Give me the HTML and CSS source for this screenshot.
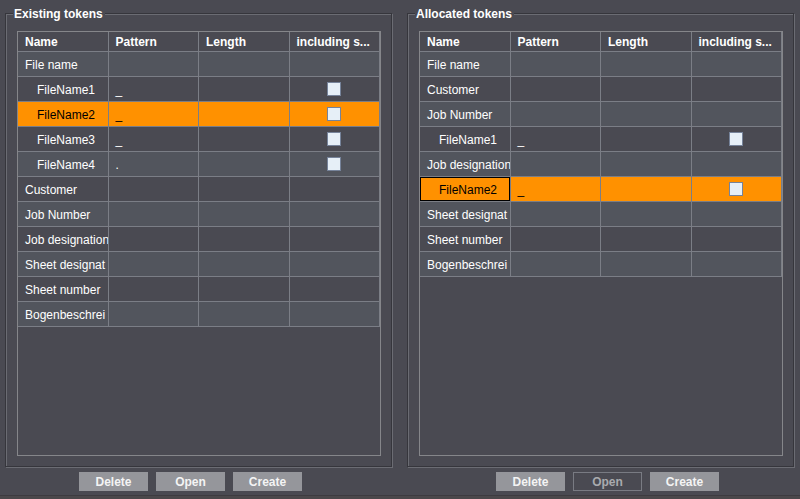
FILE: index.html
```html
<!DOCTYPE html>
<html lang="en">
<head>
  <meta charset="UTF-8" />
  <title>Tokens</title>
  <link rel="stylesheet" href="styles.css">
</head>
<body>

<main class="panels">
  <section class="panel">
    <fieldset class="group">
      <legend>Existing tokens</legend>
      <div class="list">
        <table>
          <thead>
            <tr><th>Name</th><th>Pattern</th><th>Length</th><th>including s...</th></tr>
          </thead>
          <tbody>
            <tr><td>File name</td><td></td><td></td><td></td></tr>
            <tr><td class="sub">FileName1</td><td>_</td><td></td><td class="check"><input type="checkbox" aria-label="FileName1 including separator"></td></tr>
            <tr class="selected"><td class="sub">FileName2</td><td>_</td><td></td><td class="check"><input type="checkbox" aria-label="FileName2 including separator"></td></tr>
            <tr><td class="sub">FileName3</td><td>_</td><td></td><td class="check"><input type="checkbox" aria-label="FileName3 including separator"></td></tr>
            <tr><td class="sub">FileName4</td><td>.</td><td></td><td class="check"><input type="checkbox" aria-label="FileName4 including separator"></td></tr>
            <tr><td>Customer</td><td></td><td></td><td></td></tr>
            <tr><td>Job Number</td><td></td><td></td><td></td></tr>
            <tr><td>Job designation</td><td></td><td></td><td></td></tr>
            <tr><td>Sheet designat</td><td></td><td></td><td></td></tr>
            <tr><td>Sheet number</td><td></td><td></td><td></td></tr>
            <tr><td>Bogenbeschrei</td><td></td><td></td><td></td></tr>
          </tbody>
        </table>
      </div>
    </fieldset>
    <div class="buttons buttons-existing">
      <button type="button">Delete</button>
      <button type="button">Open</button>
      <button type="button">Create</button>
    </div>
  </section>

  <section class="panel">
    <fieldset class="group">
      <legend>Allocated tokens</legend>
      <div class="list">
        <table>
          <thead>
            <tr><th>Name</th><th>Pattern</th><th>Length</th><th>including s...</th></tr>
          </thead>
          <tbody>
            <tr><td>File name</td><td></td><td></td><td></td></tr>
            <tr><td>Customer</td><td></td><td></td><td></td></tr>
            <tr><td>Job Number</td><td></td><td></td><td></td></tr>
            <tr><td class="sub">FileName1</td><td>_</td><td></td><td class="check"><input type="checkbox" aria-label="FileName1 including separator"></td></tr>
            <tr><td>Job designation</td><td></td><td></td><td></td></tr>
            <tr class="selected"><td class="sub focused">FileName2</td><td>_</td><td></td><td class="check"><input type="checkbox" aria-label="FileName2 including separator"></td></tr>
            <tr><td>Sheet designat</td><td></td><td></td><td></td></tr>
            <tr><td>Sheet number</td><td></td><td></td><td></td></tr>
            <tr><td>Bogenbeschrei</td><td></td><td></td><td></td></tr>
          </tbody>
        </table>
      </div>
    </fieldset>
    <div class="buttons buttons-allocated">
      <button type="button">Delete</button>
      <button type="button" disabled>Open</button>
      <button type="button">Create</button>
    </div>
  </section>
</main>
<footer class="edge"></footer>

</body>
</html>
```
FILE: styles.css
```css
* {
  box-sizing: border-box;
}
body {
  margin: 0;
  height: 100vh;
  display: flex;
  flex-direction: column;
  background-color: #4a4a52;
  color: white;
  font-family: "Liberation Sans", Arial, sans-serif;
  font-size: 12px;
}
.panels {
  flex: 1;
  display: flex;
  gap: 15px;
  padding: 6px 6px 4px 5px;
}
.panel {
  flex: 1;
  min-width: 0;
  display: flex;
  flex-direction: column;
}
/* etched frame: dark line with a light line beside it */
.group {
  flex: 1;
  min-width: 0;
  margin: 0;
  padding: 10px 10px 10px 11px;
  border: 1px solid #36363c;
  box-shadow: 1px 1px 0 #6b6c73, inset 1px 1px 0 #6b6c73;
}
.group legend {
  margin-left: -4px;
  padding: 2px 2px 0 1px;
  background-color: #4a4a52;
  font-weight: bold;
  line-height: 13px;
}
.list {
  height: 100%;
  border: 1px solid #85868a;
}
table {
  width: 100%;
  table-layout: fixed;
  border-spacing: 0;
}
th, td {
  padding: 2px 0 0 7px;
  border-right: 1px solid #7b7e86;
  border-bottom: 1px solid #7b7e86;
  text-align: left;
  white-space: nowrap;
  overflow: hidden;
}
th {
  height: 20px;
  line-height: 17px;
}
td {
  height: 25px;
  line-height: 22px;
}
tbody tr:nth-child(odd) {
  background-color: #52555d;
}
tbody tr.selected {
  background-color: #ff9100;
  color: black;
}
td.sub {
  padding-left: 19px;
}
.focused {
  box-shadow: inset 0 0 0 1px black;
}
td.check {
  padding: 0;
}
.check input {
  appearance: none;
  display: block;
  width: 14px;
  height: 14px;
  margin: 0 auto;
  border: 1px solid #76839a;
  background-color: #e6eff7;
}
.check input:checked {
  background-color: #ff9100;
}
.buttons {
  display: flex;
  gap: 8px;
  margin-top: 5px;
}
.buttons-existing {
  padding-left: 74px;
}
.buttons-allocated {
  padding-left: 89px;
}
button {
  width: 69px;
  height: 19px;
  padding: 0;
  border: 1px solid #95969b;
  background-color: #95969b;
  color: #f4f4f4;
  font: bold 12px "Liberation Sans", Arial, sans-serif;
}
button:disabled {
  border-color: #797b83;
  background-color: transparent;
  color: #a9aaae;
}
.edge {
  height: 4px;
  border-top: 1px solid #3d3b40;
  background-color: #4b484b;
}
```
